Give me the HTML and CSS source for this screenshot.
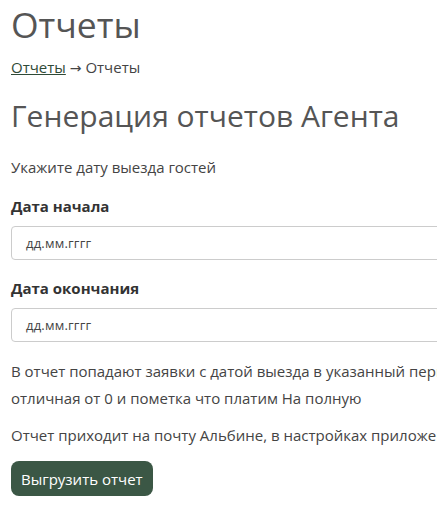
FILE: index.html
```html
<!DOCTYPE html>
<html lang="ru">
<head>
<meta charset="utf-8">
<title>Отчеты</title>
<link rel="stylesheet" href="styles.css">
</head>
<body>
<main class="page">
  <h1 class="page-title">Отчеты</h1>
  <nav class="breadcrumbs"><a href="#" class="crumb-link">Отчеты</a> <span class="arrow">→</span> Отчеты</nav>
  <h2 class="section-title">Генерация отчетов Агента</h2>
  <p class="hint">Укажите дату выезда гостей</p>
  <form class="report-form">
    <label class="field">
      <span class="field-label">Дата начала</span>
      <span class="date-input">дд.мм.гггг</span>
    </label>
    <label class="field">
      <span class="field-label">Дата окончания</span>
      <span class="date-input">дд.мм.гггг</span>
    </label>
    <p class="note">В отчет попадают заявки с датой выезда в указанный период, у которых сумма оплаты<br>отличная от 0 и пометка что платим На полную</p>
    <p class="note">Отчет приходит на почту Альбине, в настройках приложения можно изменить адрес</p>
    <button type="button" class="btn">Выгрузить отчет</button>
  </form>
</main>
</body>
</html>
```
FILE: styles.css
```css
html, body {
  margin: 0;
  padding: 0;
  overflow: hidden;
  background: #fff;
}
body {
  font-family: "Open Sans", "Liberation Sans", sans-serif;
  color: #444;
  font-size: 15px;
}
.page {
  width: 820px;
  padding: 0 11px;
}
.page-title {
  margin: 0;
  padding-top: 1px;
  font-size: 35.5px;
  font-weight: 400;
  color: #555;
  line-height: 46px;
}
.breadcrumbs {
  margin-top: 10px;
  font-size: 15px;
  line-height: 20px;
  color: #444;
}
.arrow {
  font-family: "DejaVu Sans", sans-serif;
  font-size: 14px;
}
.crumb-link {
  color: #2f4a37;
  text-decoration: underline;
}
.section-title {
  margin: 20px 0 0;
  font-size: 30px;
  font-weight: 400;
  color: #555;
  line-height: 36px;
}
.hint {
  margin: 22px 0 0;
  line-height: 22px;
}
.report-form {
  display: flex;
  flex-direction: column;
}
.field {
  display: flex;
  flex-direction: column;
  margin-top: 17px;
}
.field-label {
  font-weight: 700;
  color: #333;
  line-height: 22px;
}
.date-input {
  margin-top: 9px;
  height: 32px;
  border: 1px solid #ccc;
  border-radius: 4px;
  padding: 0 14px;
  display: flex;
  align-items: center;
  font-size: 13px;
  color: #444;
  letter-spacing: 0.2px;
}
.note {
  margin: 16px 0 0;
  line-height: 27px;
  white-space: nowrap;
}
.note + .note {
  margin-top: 10px;
}
.btn {
  align-self: flex-start;
  margin-top: 12px;
  background: #3b5745;
  color: #fff;
  border: none;
  border-radius: 8px;
  font-family: inherit;
  font-size: 15px;
  height: 35px;
  padding: 0 10px;
}
```
